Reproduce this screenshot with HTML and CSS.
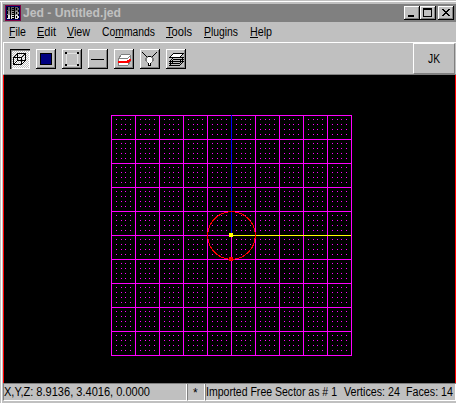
FILE: index.html
```html
<!DOCTYPE html>
<html lang="en"><head><meta charset="utf-8"><title>Jed - Untitled.jed</title><link rel="stylesheet" href="styles.css"></head>
<body><main class="window">
<header class="titlebar">
<svg class="appicon" width="16" height="16" shape-rendering="crispEdges"><defs><path id="jed" d="M3 0h2v4H2V3h1zM6 0h3v1H7v1h2v1H7v1H6zM10 0h3v1h1v2h-1v1h-3z"/></defs><path fill="#800040" d="M0 0h16v16H0z"/><path fill="#000060" d="M1 1h14v14H1z"/><path fill="#000" d="M2 2h12v12H2z"/><use href="#jed" y="2" fill="#606060"/><use href="#jed" y="6" fill="#909090"/><use href="#jed" y="10" fill="#e0e0e0"/><path d="M11 3h1v2h-1zM11 7h1v2h-1zM11 11h1v2h-1z"/></svg>
<svg class="title" width="110" height="18"><text x="1" y="13" textLength="98" lengthAdjust="spacingAndGlyphs">Jed - Untitled.jed</text></svg>
<div class="controls"><button class="raised ctl"><svg width="12" height="10" shape-rendering="crispEdges"><path d="M2 7h6v2H2z"/></svg></button><button class="raised ctl"><svg width="12" height="10" shape-rendering="crispEdges"><path fill-rule="evenodd" d="M1 0h9v9H1zM2 2v6h7V2z"/></svg></button><button class="raised ctl close"><svg width="12" height="10" shape-rendering="crispEdges"><path d="M2 1h2v1h1v1h2V2h1V1h2v1H9v1H8v1H7v1h1v1h1v1h1v1H8V7H7V6H5v1H4v1H2V7h1V6h1V5h1V4H4V3H3V2H2z"/></svg></button></div>
</header>
<nav class="menu">
<svg width="280" height="20"><text x="3" y="14" textLength="17" lengthAdjust="spacingAndGlyphs">File</text><text x="31" y="14" textLength="19" lengthAdjust="spacingAndGlyphs">Edit</text><text x="61" y="14" textLength="23" lengthAdjust="spacingAndGlyphs">View</text><text x="96" y="14" textLength="53" lengthAdjust="spacingAndGlyphs">Commands</text><text x="160" y="14" textLength="26" lengthAdjust="spacingAndGlyphs">Tools</text><text x="198" y="14" textLength="34" lengthAdjust="spacingAndGlyphs">Plugins</text><text x="244" y="14" textLength="22" lengthAdjust="spacingAndGlyphs">Help</text><path d="M3 15h6v1H3zM31 15h7v1h-7zM61 15h7v1h-7zM109 15h8v1h-8zM160 15h7v1h-7zM198 15h7v1h-7zM244 15h8v1h-8z"/></svg>
</nav>
<section class="toolbar">
<div class="tools">
<button class="tool pressed"><svg width="16" height="16" fill="none" stroke="#000" shape-rendering="crispEdges"><path d="M1.500 6.500h8v7h-8zM5.500 2.500h8v7h-8zM1.500 6.500l4-4M9.500 6.500l4-4M1.500 13.500l4-4M9.500 13.500l4-4"/></svg></button>
<button class="tool raised"><svg width="16" height="16" shape-rendering="crispEdges"><path d="M2 2h12v12H2z"/><path fill="#000080" d="M3 3h10v10H3z"/></svg></button>
<button class="tool raised"><svg width="16" height="16" shape-rendering="crispEdges"><path fill="none" stroke="#e0e0e0" d="M2.500 2.500h11v12h-11z"/><path d="M1 1h2v2H1zM13 1h2v2h-2zM1 13h2v2H1zM13 13h2v2h-2z"/></svg></button>
<button class="tool raised"><svg width="16" height="16" shape-rendering="crispEdges"><path d="M1 8h13v1H1z"/></svg></button>
<button class="tool raised"><svg width="16" height="16" shape-rendering="crispEdges"><path fill="#fff" stroke="#808080" d="M2.500 7.500l3-4h8l1 1v6l-3 4h-9z"/><path stroke="#808080" fill="none" d="M2.500 7.500h9l3-3"/><path fill="red" d="M2 10h9v2H2zM11 9h2V8h2v2h-1v1h-1v1h-2z"/></svg></button>
<button class="tool raised"><svg width="16" height="16" shape-rendering="crispEdges"><path fill="#808080" d="M4 5h7v2h1v3h-1v1h-1v1H5v-1H4v-1H3V7h1z"/><path fill="none" stroke="#000" d="M.500 1.500l5 5M14.500 1.500l-5 5"/><path fill="#fff" d="M6 6h3v1h1v4H9v1H6v-1H5V7h1z"/><path d="M6 5h3v1H6zM6 12h3v3H6z"/><path fill="#fff" d="M7 12h1v2H7z"/></svg></button>
<button class="tool raised"><svg width="17" height="16" fill="#c0c0c0" stroke="#000" shape-rendering="crispEdges"><path d="M1.500 14.500l4-4h10l-4 4zM1.500 12.500l4-4h10l-4 4zM1.500 10.500l4-4h10l-4 4z"/><path fill="#fff" d="M1.500 6.500l4-4h10l-4 4z"/></svg></button>
</div><div class="jk"><svg width="20" height="16"><text x="4" y="12" textLength="12" lengthAdjust="spacingAndGlyphs">JK</text></svg></div>
</section>
<section class="canvas"><svg width="453" height="308" viewBox="3 75 453 308" shape-rendering="crispEdges">
<defs><pattern id="grid" x="111" y="115" width="24" height="24" patternUnits="userSpaceOnUse"><path fill="#f0f" d="M0 0h24v1H0zM0 0h1v24H0zM5 4h1v1H5zM10 4h1v1h-1zM14 4h1v1h-1zM19 4h1v1h-1zM5 9h1v1H5zM10 9h1v1h-1zM14 9h1v1h-1zM19 9h1v1h-1zM5 14h1v1H5zM10 14h1v1h-1zM14 14h1v1h-1zM19 14h1v1h-1zM5 19h1v1H5zM10 19h1v1h-1zM14 19h1v1h-1zM19 19h1v1h-1z"/></pattern></defs>
<path fill="url(#grid)" d="M111 115h241v241H111z"/><path fill="#00f" d="M231 115h1v120h-1z"/><path fill="#ff0" d="M231 235h120v1H231z"/>
<circle cx="231.500" cy="235.500" r="23.800" fill="none" stroke="red"/><path fill="red" d="M229 257h4v4h-4zM3 75h1v308H3zM455 75h1v308h-1z"/><path fill="#ff0" d="M229 233h4v4h-4z"/>
</svg></section>
<footer class="status"><div class="coord"><svg width="182" height="15"><text x="0" y="12" textLength="146" lengthAdjust="spacingAndGlyphs">X,Y,Z: 8.9136, 3.4016, 0.0000</text></svg></div><div class="star"><svg width="16" height="15"><text x="5" y="13">*</text></svg></div><div class="message"><svg width="249" height="15"><text x="0" y="12" textLength="131" lengthAdjust="spacingAndGlyphs">Imported Free Sector as # 1</text><text x="138" y="12" textLength="56" lengthAdjust="spacingAndGlyphs">Vertices: 24</text><text x="200" y="12" textLength="47" lengthAdjust="spacingAndGlyphs">Faces: 14</text></svg></div></footer>
</main></body></html>
```

FILE: styles.css
```css
* { box-sizing: border-box; }
body { margin: 0; background: #c0c0c0; overflow: hidden; }
svg { display: block; flex-shrink: 0; }
text { font: 12.5px "Liberation Sans", sans-serif; }
.status text { font-size: 12px; }
.window { width: 456px; height: 403px; padding: 4px 0 0 3px; background: linear-gradient(#c0c0c0 0 1px, #fff 1px 2px, transparent 2px), linear-gradient(90deg, #c0c0c0 0 1px, #fff 1px 2px, #c0c0c0 2px); }
.titlebar { height: 18px; display: flex; align-items: center; padding: 0 2px; background: #808080; }
.title { margin-left: 1px; }
.title text { font-size: 13px; font-weight: bold; fill: #c0c0c0; }
.controls { display: flex; margin-left: auto; }
button { padding: 0; border: 0; display: flex; align-items: center; justify-content: center; background: #c0c0c0; }
.raised { box-shadow: inset -1px -1px #000, inset 1px 1px #fff, inset -2px -2px #808080; }
.ctl { width: 16px; height: 14px; }
.close { margin-left: 2px; }
.menu { height: 20px; padding-left: 3px; }
.toolbar { height: 33px; display: flex; justify-content: space-between; border-top: 1px solid #fff; border-left: 1px solid #fff; border-bottom: 1px solid #808080; }
.tools { display: flex; gap: 6px; padding: 6px 0 0 6px; }
.tool { width: 20px; height: 20px; }
.pressed { background: repeating-conic-gradient(#fff 0 25%, #c0c0c0 0 50%) 0 0 / 2px 2px; box-shadow: inset 1px 1px #000, inset 2px 2px #808080, inset -1px -1px #fff; }
.jk { width: 42px; height: 31px; margin-right: 1px; display: flex; align-items: center; justify-content: center; border: 1px solid #fff; border-right-color: #808080; border-bottom-color: #808080; }
.canvas { height: 308px; background: #000; }
.status { height: 18px; display: flex; border-top: 1px solid #808080; }
.status > div { height: 17px; border-bottom: 1px solid #fff; border-right: 1px solid #fff; border-left: 1px solid #808080; }
.coord { width: 184px; }
.star { width: 18px; }
.message { width: 251px; }
```
